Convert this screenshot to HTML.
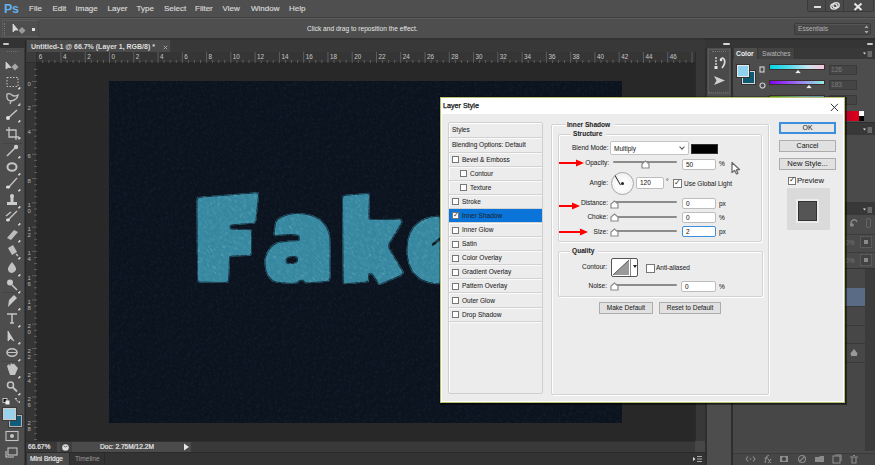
<!DOCTYPE html>
<html><head><meta charset="utf-8">
<style>
*{margin:0;padding:0;box-sizing:border-box}
html,body{width:875px;height:465px;overflow:hidden;background:#282828;font-family:"Liberation Sans",sans-serif;position:relative}
.a{position:absolute}
.mt{position:absolute;top:3px;font-size:8px;color:#dadada;line-height:11px;-webkit-text-stroke:0.15px}
.dt{position:absolute;font-size:6.5px;color:#1e1e1e;line-height:8px;white-space:nowrap;-webkit-text-stroke:0.05px}
.rl{position:absolute;font-size:6.3px;color:#c8c8c8;line-height:7px}
.ti{position:absolute;left:0;width:25px;height:17px}
</style></head><body>

<!-- menu bar -->
<div class="a" style="left:0;top:0;width:875px;height:17px;background:#4f4f4f"></div>
<div class="a" style="left:0;top:17px;width:875px;height:1px;background:#3f3f3f"></div>
<div class="a" style="left:0;top:18px;width:875px;height:1px;background:#5c5c5c"></div>
<div class="a" style="left:4px;top:1.5px;font-size:12.5px;font-weight:bold;color:#62b0ec;line-height:14px;letter-spacing:-0.3px">Ps</div>
<div class="mt" style="left:29px">File</div>
<div class="mt" style="left:52.5px">Edit</div>
<div class="mt" style="left:75.5px">Image</div>
<div class="mt" style="left:107.5px">Layer</div>
<div class="mt" style="left:136.5px">Type</div>
<div class="mt" style="left:164px">Select</div>
<div class="mt" style="left:195px">Filter</div>
<div class="mt" style="left:222.5px">View</div>
<div class="mt" style="left:251px">Window</div>
<div class="mt" style="left:289px">Help</div>
<!-- window buttons -->
<div class="a" style="left:807px;top:-2px;width:67px;height:14px;background:#4a4a4a;border:1px solid #3a3a3a;border-radius:2px"></div>
<div class="a" style="left:825px;top:0;width:1px;height:11px;background:#3a3a3a"></div>
<div class="a" style="left:843px;top:0;width:1px;height:11px;background:#3a3a3a"></div>
<div class="a" style="left:814px;top:6px;width:7px;height:2px;background:#e0e0e0"></div>
<svg class="a" style="left:829px;top:1px" width="12" height="10"><ellipse cx="5" cy="5.5" rx="3.2" ry="2.6" fill="none" stroke="#e0e0e0" stroke-width="1.4"/><ellipse cx="7" cy="4.2" rx="3.2" ry="2.6" fill="none" stroke="#e0e0e0" stroke-width="1.4"/></svg>
<svg class="a" style="left:852.5px;top:1.5px" width="11" height="10"><path d="M1.5,1.5 L8.5,8 M8.5,1.5 L1.5,8" stroke="#e8e8e8" stroke-width="1.9"/></svg>
<!-- options bar -->
<div class="a" style="left:0;top:19px;width:875px;height:19px;background:#4e4e4e"></div>
<div class="a" style="left:2px;top:20px;width:37px;height:17px;border:1px solid #5a5a5a;border-right:1px solid #444"></div>
<div class="a" style="left:4px;top:23px;width:1px;height:12px;border-left:1px dotted #777"></div>
<svg class="a" style="left:12px;top:23px" width="16" height="13"><path d="M1,1 L1,9 L3,7 L6,7 Z" fill="#d8d8d8" stroke="#d8d8d8" stroke-width="0.8"/><path d="M10,4 L13.5,7.5 L10,11 L6.5,7.5 Z" fill="#9a9a9a"/></svg>
<div class="a" style="left:32px;top:28px;width:3px;height:3px;background:#e0e0e0"></div>
<div class="a" style="left:307px;top:25px;font-size:6.6px;color:#e6e6e6;line-height:8px">Click and drag to reposition the effect.</div>
<div class="a" style="left:794px;top:23px;width:77px;height:12px;background:#474747;border:1px solid #3b3b3b;border-radius:2px;box-shadow:inset 0 1px 0 #555"></div>
<div class="a" style="left:798px;top:25px;font-size:6.6px;color:#b4b4b4;line-height:8px">Essentials</div>
<svg class="a" style="left:864px;top:25px" width="5" height="9"><path d="M2.5,0.5 L4.5,3 L0.5,3 Z M2.5,8.5 L4.5,6 L0.5,6 Z" fill="#aaa"/></svg>
<div class="a" style="left:0;top:38px;width:875px;height:2px;background:#333"></div>

<!-- tools panel -->
<div class="a" style="left:0;top:40px;width:25px;height:425px;background:#4d4d4d;border-right:1px solid #3a3a3a"></div>
<div class="a" style="left:0;top:40px;width:25px;height:8px;background:#333"></div>
<div class="a" style="left:3px;top:42.5px;width:6px;height:2.5px;background:#c8c8c8;border-radius:1px"></div>
<div class="a" style="left:7px;top:50.5px;width:11px;height:1px;border-top:1px dotted #707070"></div>
<div class="a" style="left:2px;top:143px;width:21px;height:1px;background:#444"></div>
<div class="a" style="left:2px;top:291.5px;width:21px;height:1px;background:#444"></div>
<div class="a" style="left:2px;top:361px;width:21px;height:1px;background:#444"></div>
<svg class="a" style="left:0;top:55px" width="25" height="410" fill="none" stroke="#c4c4c4" stroke-width="1.3">
<!-- move 65.5 -->
<path d="M6,7 L6,14 L8,12.5 L11,12.5 Z" fill="#d0d0d0" stroke="#d0d0d0" stroke-width="0.8"/>
<path d="M15,8.5 L18.5,12 L15,15.5 L11.5,12 Z" fill="#a8a8a8" stroke="none"/>
<!-- marquee 82 -->
<rect x="7" y="22.5" width="11" height="9" stroke-dasharray="1.5 1.5" stroke-width="1"/>
<!-- lasso 98 -->
<path d="M7,39 Q6,46 11,46 Q17,45 18,40 Q14,42 12,40 Q9,38 7,39 Z M11,46 L10,49"/>
<!-- quick select 115 -->
<path d="M7,64 L17,55" stroke-width="1.6"/><circle cx="8" cy="63" r="2" fill="#ddd" stroke="none"/>
<!-- crop 132 -->
<path d="M9,72 L9,82 L19,82 M6,75 L16,75 L16,85"/>
<!-- eyedropper 150 -->
<path d="M7,101 L15,93" stroke-width="1.6"/><circle cx="16" cy="92" r="2.2" fill="#ccc" stroke="none"/>
<!-- spot heal 167 -->
<ellipse cx="12" cy="112" rx="4.5" ry="3.8" stroke-width="2"/>
<!-- brush 183 -->
<path d="M8,133 L17,123" stroke-width="1.3"/><ellipse cx="8" cy="132" rx="2.2" ry="1.5" fill="#ddd" stroke="none"/>
<!-- clone stamp 200 -->
<rect x="7" y="147" width="10" height="3" fill="#ccc" stroke="none"/><rect x="10.5" y="141" width="3" height="6" fill="#ccc" stroke="none"/><circle cx="12" cy="141" r="2" fill="#ccc" stroke="none"/>
<!-- history brush 216.5 -->
<path d="M7,166 L17,156 M6,161 L11,157" stroke-width="1.4"/><ellipse cx="8" cy="165" rx="2" ry="1.4" fill="#ddd" stroke="none"/>
<!-- eraser 234 -->
<path d="M7,183 L14,175 L18,177 L11,185 Z" fill="#bdbdbd" stroke="none"/>
<!-- bucket 251 -->
<path d="M8,193 L13,190 L17,197 L12,200 Z" fill="#bdbdbd" stroke="none"/><path d="M16,199 L18,201" />
<!-- blur 267.5 -->
<path d="M12,207 Q17,213 16,215 Q14,218 12,218 Q9,218 8,215 Q7,213 12,207 Z" fill="#c0c0c0" stroke="none"/>
<!-- dodge 284.5 -->
<circle cx="10" cy="227.5" r="3" fill="#c8c8c8" stroke="none"/><path d="M12,230 L17,235" stroke-width="1.6"/>
<!-- pen 302 -->
<path d="M8,252 L9,245 L14,240 L17,243 L12,248 Z" fill="#c8c8c8" stroke="none"/>
<!-- type 319 -->
<path d="M7,259 L17,259 M12,259 L12,268 M10,268 L14,268" stroke-width="1.5"/>
<!-- path select 336 -->
<path d="M8,276 L8,286 L10.5,283.5 L14,286 Z" fill="#ccc" stroke="#ccc" stroke-width="0.8"/>
<!-- ellipse 352.5 -->
<ellipse cx="12" cy="297.5" rx="5" ry="3.8" stroke-width="1.6"/><path d="M8,297.5 L16,297.5" stroke-width="1"/>
<!-- hand 370 -->
<path d="M7,311 L9,309 L10,311 L11,308 L13,309.5 L14,308.5 L16,311 L18,313 L15,320 L10,320 Z" fill="#c4c4c4" stroke="none"/>
<!-- zoom 387.5 -->
<circle cx="10.5" cy="330" r="3" stroke-width="1.5"/><path d="M13,332.5 L17,336.5" stroke-width="1.8"/>
<!-- more triangles -->
<path d="M18,34 L20,34 L20,32 Z M18,50.5 L20,50.5 L20,48.5 Z M18,67 L20,67 L20,65 Z M18,84 L20,84 L20,82 Z M18,103 L20,103 L20,101 Z M18,120 L20,120 L20,118 Z M18,136 L20,136 L20,134 Z M18,153 L20,153 L20,151 Z M18,170 L20,170 L20,168 Z M18,187 L20,187 L20,185 Z M18,204 L20,204 L20,202 Z M18,221 L20,221 L20,219 Z M18,238 L20,238 L20,236 Z M18,255 L20,255 L20,253 Z M18,272 L20,272 L20,270 Z M18,289 L20,289 L20,287 Z M18,306 L20,306 L20,304 Z M18,323 L20,323 L20,321 Z M18,340 L20,340 L20,338 Z" fill="#d0d0d0" stroke="#d0d0d0" stroke-width="0.8"/>
<!-- default colors ~400 -->
<rect x="3" y="343.5" width="4" height="4" fill="#111" stroke="#ddd" stroke-width="0.8"/><rect x="5.5" y="345.5" width="4" height="4" fill="#eee" stroke="none"/><path d="M15,343.5 L19.5,348 M15,343.5 L17,343.5 M19.5,348 L19.5,346" stroke-width="1"/>
</svg>
<div class="a" style="left:9px;top:414.5px;width:12.5px;height:12.5px;background:#0f5d7c;border:1px solid #b8b0a8;box-shadow:0 0 0 1px #3a3a3a"></div>
<div class="a" style="left:3px;top:407.5px;width:12.5px;height:12px;background:#98d2ec;border:1px solid #d0ccc8;box-shadow:0 0 0 1px #3a3a3a"></div>
<svg class="a" style="left:4px;top:430px" width="17" height="30" fill="none" stroke="#c4c4c4" stroke-width="1.1">
<rect x="2" y="1.5" width="12" height="9"/><circle cx="8" cy="6" r="2" fill="#c4c4c4" stroke="none"/>
<rect x="4" y="18" width="9" height="7"/><path d="M2,21 L2,27 L10,27" />
</svg>

<!-- doc area -->
<div class="a" style="left:26px;top:40px;width:679px;height:12px;background:#383838"></div>
<div class="a" style="left:27px;top:40px;width:144px;height:12px;background:#4a4a4a;border-right:1px solid #3a3a3a"></div>
<div class="a" style="left:31px;top:42.5px;font-size:7px;font-weight:bold;color:#dedede;line-height:8px">Untitled-1 @ 66.7% (Layer 1, RGB/8) *</div>
<svg class="a" style="left:162.5px;top:44.5px" width="5" height="5"><path d="M0.8,0.8 L4.2,4.2 M4.2,0.8 L0.8,4.2" stroke="#aaa" stroke-width="0.9"/></svg>
<div class="a" style="left:26px;top:52px;width:669px;height:11px;background:#353535;border-bottom:1px solid #262626"></div>
<div class="a" style="left:26px;top:52px;width:11px;height:11px;background:#3c3c3c;border-right:1px solid #2e2e2e;border-bottom:1px solid #2e2e2e"></div>
<div class="a" style="left:26px;top:63px;width:11px;height:378px;background:#353535;border-right:1px solid #262626"></div>
<div class="a" style="left:37px;top:63px;width:658px;height:378px;background:#282828"></div>
<svg class="a" style="left:37px;top:52px" width="658" height="11"><path d="M5.76,8 L5.76,11 M11.82,8 L11.82,11 M17.89,8 L17.89,11 M23.96,0 L23.96,11 M30.03,8 L30.03,11 M36.09,8 L36.09,11 M42.16,8 L42.16,11 M48.23,0 L48.23,11 M54.30,8 L54.30,11 M60.37,8 L60.37,11 M66.43,8 L66.43,11 M72.50,0 L72.50,11 M78.57,8 L78.57,11 M84.64,8 L84.64,11 M90.70,8 L90.70,11 M96.77,0 L96.77,11 M102.84,8 L102.84,11 M108.91,8 L108.91,11 M114.97,8 L114.97,11 M121.04,0 L121.04,11 M127.11,8 L127.11,11 M133.17,8 L133.17,11 M139.24,8 L139.24,11 M145.31,0 L145.31,11 M151.38,8 L151.38,11 M157.44,8 L157.44,11 M163.51,8 L163.51,11 M169.58,0 L169.58,11 M175.65,8 L175.65,11 M181.71,8 L181.71,11 M187.78,8 L187.78,11 M193.85,0 L193.85,11 M199.92,8 L199.92,11 M205.98,8 L205.98,11 M212.05,8 L212.05,11 M218.12,0 L218.12,11 M224.19,8 L224.19,11 M230.25,8 L230.25,11 M236.32,8 L236.32,11 M242.39,0 L242.39,11 M248.46,8 L248.46,11 M254.52,8 L254.52,11 M260.59,8 L260.59,11 M266.66,0 L266.66,11 M272.73,8 L272.73,11 M278.79,8 L278.79,11 M284.86,8 L284.86,11 M290.93,0 L290.93,11 M297.00,8 L297.00,11 M303.06,8 L303.06,11 M309.13,8 L309.13,11 M315.20,0 L315.20,11 M321.27,8 L321.27,11 M327.33,8 L327.33,11 M333.40,8 L333.40,11 M339.47,0 L339.47,11 M345.54,8 L345.54,11 M351.60,8 L351.60,11 M357.67,8 L357.67,11 M363.74,0 L363.74,11 M369.81,8 L369.81,11 M375.88,8 L375.88,11 M381.94,8 L381.94,11 M388.01,0 L388.01,11 M394.08,8 L394.08,11 M400.14,8 L400.14,11 M406.21,8 L406.21,11 M412.28,0 L412.28,11 M418.35,8 L418.35,11 M424.41,8 L424.41,11 M430.48,8 L430.48,11 M436.55,0 L436.55,11 M442.62,8 L442.62,11 M448.69,8 L448.69,11 M454.75,8 L454.75,11 M460.82,0 L460.82,11 M466.89,8 L466.89,11 M472.95,8 L472.95,11 M479.02,8 L479.02,11 M485.09,0 L485.09,11 M491.16,8 L491.16,11 M497.22,8 L497.22,11 M503.29,8 L503.29,11 M509.36,0 L509.36,11 M515.43,8 L515.43,11 M521.50,8 L521.50,11 M527.56,8 L527.56,11 M533.63,0 L533.63,11 M539.70,8 L539.70,11 M545.76,8 L545.76,11 M551.83,8 L551.83,11 M557.90,0 L557.90,11 M563.97,8 L563.97,11 M570.03,8 L570.03,11 M576.10,8 L576.10,11 M582.17,0 L582.17,11 M588.24,8 L588.24,11 M594.31,8 L594.31,11 M600.37,8 L600.37,11 M606.44,0 L606.44,11 M612.51,8 L612.51,11 M618.57,8 L618.57,11 M624.64,8 L624.64,11 M630.71,0 L630.71,11 M636.78,8 L636.78,11 M642.85,8 L642.85,11 M648.91,8 L648.91,11 M654.98,0 L654.98,11" stroke="#5e5e5e" stroke-width="1"/></svg>
<div class="rl" style="left:38.7px;top:52.5px">6</div>
<div class="rl" style="left:63.0px;top:52.5px">4</div>
<div class="rl" style="left:87.2px;top:52.5px">2</div>
<div class="rl" style="left:111.5px;top:52.5px">0</div>
<div class="rl" style="left:135.8px;top:52.5px">2</div>
<div class="rl" style="left:160.0px;top:52.5px">4</div>
<div class="rl" style="left:184.3px;top:52.5px">6</div>
<div class="rl" style="left:208.6px;top:52.5px">8</div>
<div class="rl" style="left:232.8px;top:52.5px">10</div>
<div class="rl" style="left:257.1px;top:52.5px">12</div>
<div class="rl" style="left:281.4px;top:52.5px">14</div>
<div class="rl" style="left:305.7px;top:52.5px">16</div>
<div class="rl" style="left:329.9px;top:52.5px">18</div>
<div class="rl" style="left:354.2px;top:52.5px">20</div>
<div class="rl" style="left:378.5px;top:52.5px">22</div>
<div class="rl" style="left:402.7px;top:52.5px">24</div>
<div class="rl" style="left:427.0px;top:52.5px">26</div>
<div class="rl" style="left:451.3px;top:52.5px">28</div>
<div class="rl" style="left:475.6px;top:52.5px">30</div>
<div class="rl" style="left:499.8px;top:52.5px">32</div>
<div class="rl" style="left:524.1px;top:52.5px">34</div>
<div class="rl" style="left:548.4px;top:52.5px">36</div>
<div class="rl" style="left:572.6px;top:52.5px">38</div>
<div class="rl" style="left:596.9px;top:52.5px">40</div>
<div class="rl" style="left:621.2px;top:52.5px">42</div>
<div class="rl" style="left:645.4px;top:52.5px">44</div>
<div class="rl" style="left:669.7px;top:52.5px">46</div>
<svg class="a" style="left:26px;top:63px" width="11" height="378"><path d="M8,6.37 L11,6.37 M8,12.43 L11,12.43 M6,18.50 L11,18.50 M8,24.57 L11,24.57 M8,30.63 L11,30.63 M8,36.70 L11,36.70 M6,42.77 L11,42.77 M8,48.84 L11,48.84 M8,54.90 L11,54.90 M8,60.97 L11,60.97 M6,67.04 L11,67.04 M8,73.11 L11,73.11 M8,79.17 L11,79.17 M8,85.24 L11,85.24 M6,91.31 L11,91.31 M8,97.38 L11,97.38 M8,103.45 L11,103.45 M8,109.51 L11,109.51 M6,115.58 L11,115.58 M8,121.65 L11,121.65 M8,127.71 L11,127.71 M8,133.78 L11,133.78 M6,139.85 L11,139.85 M8,145.92 L11,145.92 M8,151.98 L11,151.98 M8,158.05 L11,158.05 M6,164.12 L11,164.12 M8,170.19 L11,170.19 M8,176.25 L11,176.25 M8,182.32 L11,182.32 M6,188.39 L11,188.39 M8,194.46 L11,194.46 M8,200.52 L11,200.52 M8,206.59 L11,206.59 M6,212.66 L11,212.66 M8,218.73 L11,218.73 M8,224.79 L11,224.79 M8,230.86 L11,230.86 M6,236.93 L11,236.93 M8,243.00 L11,243.00 M8,249.06 L11,249.06 M8,255.13 L11,255.13 M6,261.20 L11,261.20 M8,267.27 L11,267.27 M8,273.33 L11,273.33 M8,279.40 L11,279.40 M6,285.47 L11,285.47 M8,291.54 L11,291.54 M8,297.60 L11,297.60 M8,303.67 L11,303.67 M6,309.74 L11,309.74 M8,315.81 L11,315.81 M8,321.88 L11,321.88 M8,327.94 L11,327.94 M6,334.01 L11,334.01 M8,340.08 L11,340.08 M8,346.14 L11,346.14 M8,352.21 L11,352.21 M6,358.28 L11,358.28 M8,364.35 L11,364.35 M8,370.41 L11,370.41 M8,376.48 L11,376.48" stroke="#5e5e5e" stroke-width="1"/></svg>
<div class="rl" style="font-size:6px;color:#b8b8b8;left:27.5px;top:80.5px">0</div>
<div class="rl" style="font-size:6px;color:#b8b8b8;left:27.5px;top:104.8px">2</div>
<div class="rl" style="font-size:6px;color:#b8b8b8;left:27.5px;top:129.0px">4</div>
<div class="rl" style="font-size:6px;color:#b8b8b8;left:27.5px;top:153.3px">6</div>
<div class="rl" style="font-size:6px;color:#b8b8b8;left:27.5px;top:177.6px">8</div>
<div class="rl" style="font-size:6px;color:#b8b8b8;left:27.5px;top:201.8px">1</div>
<div class="rl" style="font-size:6px;color:#b8b8b8;left:27.5px;top:207.8px">0</div>
<div class="rl" style="font-size:6px;color:#b8b8b8;left:27.5px;top:226.1px">1</div>
<div class="rl" style="font-size:6px;color:#b8b8b8;left:27.5px;top:232.1px">2</div>
<div class="rl" style="font-size:6px;color:#b8b8b8;left:27.5px;top:250.4px">1</div>
<div class="rl" style="font-size:6px;color:#b8b8b8;left:27.5px;top:256.4px">4</div>
<div class="rl" style="font-size:6px;color:#b8b8b8;left:27.5px;top:274.7px">1</div>
<div class="rl" style="font-size:6px;color:#b8b8b8;left:27.5px;top:280.7px">6</div>
<div class="rl" style="font-size:6px;color:#b8b8b8;left:27.5px;top:298.9px">1</div>
<div class="rl" style="font-size:6px;color:#b8b8b8;left:27.5px;top:304.9px">8</div>
<div class="rl" style="font-size:6px;color:#b8b8b8;left:27.5px;top:323.2px">2</div>
<div class="rl" style="font-size:6px;color:#b8b8b8;left:27.5px;top:329.2px">0</div>
<div class="rl" style="font-size:6px;color:#b8b8b8;left:27.5px;top:347.5px">2</div>
<div class="rl" style="font-size:6px;color:#b8b8b8;left:27.5px;top:353.5px">2</div>
<div class="rl" style="font-size:6px;color:#b8b8b8;left:27.5px;top:371.7px">2</div>
<div class="rl" style="font-size:6px;color:#b8b8b8;left:27.5px;top:377.7px">4</div>
<div class="rl" style="font-size:6px;color:#b8b8b8;left:27.5px;top:396.0px">2</div>
<div class="rl" style="font-size:6px;color:#b8b8b8;left:27.5px;top:402.0px">6</div>
<div class="rl" style="font-size:6px;color:#b8b8b8;left:27.5px;top:420.3px">2</div>
<div class="rl" style="font-size:6px;color:#b8b8b8;left:27.5px;top:426.3px">8</div>
<div class="a" style="left:695px;top:52px;width:10px;height:389px;background:#383838;border-left:1px solid #2a2a2a"></div>
<div class="a" style="left:695px;top:441px;width:10px;height:11px;background:#474747"></div>
<div class="a" style="left:26px;top:441px;width:669px;height:11px;background:#393939;border-top:1px solid #303030"></div>
<div class="a" style="-webkit-text-stroke:0.2px;left:28px;top:442.5px;font-size:6.6px;color:#e6e6e6;line-height:8px">66.67%</div>
<div class="a" style="left:57px;top:442px;width:134px;height:10px;background:#4b4b4b"></div>
<div class="a" style="left:60px;top:442px;width:12px;height:10px;background:#3f3f3f"></div>
<svg class="a" style="left:61px;top:442.5px" width="9" height="9"><circle cx="4.5" cy="4.5" r="3.3" fill="#ddd"/><path d="M2.5,3 Q4.5,5 6.5,3" stroke="#555" stroke-width="0.8" fill="none"/></svg>
<div class="a" style="-webkit-text-stroke:0.2px;left:100px;top:442.5px;font-size:6.6px;color:#e8e8e8;line-height:8px">Doc: 2.75M/12.2M</div>
<svg class="a" style="left:183px;top:443px" width="7" height="8"><path d="M1,0.5 L6,4 L1,7.5 Z" fill="#e8e8e8"/></svg>
<div class="a" style="left:26px;top:452px;width:679px;height:13px;background:#333;border-top:1px solid #2a2a2a"></div>
<div class="a" style="left:27px;top:453px;width:42px;height:12px;background:#4a4a4a"></div>
<div class="a" style="-webkit-text-stroke:0.2px;left:30px;top:455px;font-size:6.6px;color:#e6e6e6;line-height:8px">Mini Bridge</div>
<div class="a" style="left:69px;top:453px;width:1px;height:12px;background:#2a2a2a"></div>
<div class="a" style="left:75px;top:455px;font-size:6.6px;color:#9a9a9a;line-height:8px">Timeline</div>
<div class="a" style="left:104px;top:453px;width:1px;height:12px;background:#2a2a2a"></div>
<svg class="a" style="left:692px;top:455px" width="11" height="8"><path d="M1,2 L3.5,4 L1,6 Z" fill="#ddd"/><path d="M5,1.5 L10,1.5 M5,4 L10,4 M5,6.5 L10,6.5" stroke="#aaa" stroke-width="1"/></svg>

<!-- canvas -->
<svg class="a" style="left:109px;top:81px" width="513" height="342" viewBox="109 81 513 342">
<defs>
<filter id="nz" x="0" y="0" width="100%" height="100%"><feTurbulence type="fractalNoise" baseFrequency="0.7 0.3" numOctaves="2" seed="11"/><feColorMatrix type="matrix" values="0 0 0 0 0.45  0 0 0 0 0.6  0 0 0 0 0.75  0 0 0 1.6 -0.7"/></filter>
<filter id="nz2" x="0" y="0" width="100%" height="100%"><feTurbulence type="fractalNoise" baseFrequency="0.6 0.22" numOctaves="2" seed="5"/><feColorMatrix type="matrix" values="0 0 0 0 0.11  0 0 0 0 0.36  0 0 0 0 0.47  0 0 0 3 -1.5"/></filter><filter id="nz3" x="0" y="0" width="100%" height="100%"><feTurbulence type="fractalNoise" baseFrequency="0.6 0.22" numOctaves="2" seed="9"/><feColorMatrix type="matrix" values="0 0 0 0 0.38  0 0 0 0 0.68  0 0 0 0 0.76  0 0 0 3 -1.6"/></filter>
<filter id="rnd" x="-5%" y="-5%" width="110%" height="110%" color-interpolation-filters="sRGB">
<feGaussianBlur in="SourceAlpha" stdDeviation="1.5"/>
<feComponentTransfer result="m"><feFuncA type="linear" slope="5" intercept="-2"/></feComponentTransfer>
<feFlood flood-color="#3587a0"/><feComposite in2="m" operator="in" result="fill"/>
<feMorphology in="m" operator="erode" radius="1" result="er"/>
<feComposite in="m" in2="er" operator="out" result="edge"/>
<feFlood flood-color="#163646"/><feComposite in2="edge" operator="in" result="ed"/>
<feMerge><feMergeNode in="fill"/><feMergeNode in="ed"/></feMerge>
</filter>
<path id="L" fill="#000" fill-rule="evenodd" d="
M196.5,197 L259.5,192 L256,223.5 L230,225.5 L230,228.8 L252,229 L252,256 L230,256.5 L229,283 L197,282.5 Z
M273,236.8 L275,222 Q278,215 294.6,213 Q318,212.5 326,225 Q330.5,232 330.5,240 L330.5,279.5 Q330,282 327,282 L304,283.5 L302,279 L298,283.5 Q285,284.5 273,282 Q264.5,276 264.3,262 Q265,248.5 276,242.3 Q288,239.8 300,240.2 L298,235.5 Q285,234 273,236.8 Z
M286,260.5 Q288,256.5 294,256.8 Q298,257.5 297.5,260.5 Q295.5,263.5 290,263.3 Q285.5,263 286,260.5 Z
M342,195 L370,192.8 L369.2,219 L401.8,218.8 L403,222.3 L388.5,246 L404,271.9 L403,275.3 L379,285.6 L369.2,271 L369,282.2 L342.8,284.5 Z
M406.5,250 Q406.5,215.5 441,215.5 L441,284.5 Q406.5,284.5 406.5,250 Z
"/>
<clipPath id="cp"><rect x="109" y="81" width="513" height="342"/></clipPath>
<clipPath id="lc"><use href="#L" clip-rule="evenodd"/></clipPath>
</defs>
<rect x="109" y="81" width="513" height="342" fill="#0b131f"/>
<g filter="url(#rnd)"><use href="#L"/></g>
<path d="M433,244.5 L441,238" stroke="#0d1824" stroke-width="2.6" stroke-linecap="round"/>
<g clip-path="url(#cp)"><g transform="rotate(-40 365 252)"><rect x="-100" y="-200" width="930" height="900" filter="url(#nz)" opacity="0.09"/></g></g>
<g clip-path="url(#lc)"><g transform="rotate(-40 320 240)"><rect x="100" y="50" width="440" height="380" filter="url(#nz2)" opacity="0.6"/><rect x="100" y="50" width="440" height="380" filter="url(#nz3)" opacity="0.25"/></g></g>
</svg>

<!-- right panels -->
<div class="a" style="left:705px;top:38px;width:170px;height:427px;background:#2e2e2e"></div>
<div class="a" style="left:705px;top:40px;width:170px;height:7.5px;background:#353535"></div>
<div class="a" style="left:723px;top:42.5px;width:7px;height:2.5px;background:#d8d8d8;border-radius:1px"></div>
<div class="a" style="left:867px;top:42.5px;width:6px;height:2.5px;background:#c8c8c8;border-radius:1px"></div>
<!-- icon column -->
<div class="a" style="left:707px;top:47.5px;width:24px;height:417.5px;background:#4d4d4d"></div>
<div class="a" style="left:708px;top:48.5px;width:22px;height:45px;border:1px solid #5a5a5a;background:#4a4a4a"></div>
<div class="a" style="left:712px;top:51px;width:14px;height:1px;border-top:1px dotted #777"></div>
<svg class="a" style="left:713px;top:56px" width="14" height="14"><path d="M2,2 L4,2 M2,5 L4,5 M2,8 L4,8" stroke="#cfcfcf" stroke-width="1.3"/><rect x="1.5" y="10" width="3" height="3" fill="#e6e6e6"/><path d="M7.5,3.5 Q10,0.5 11.5,4 Q12.5,8 9,12" stroke="#d8d8d8" stroke-width="1.8" fill="none"/><circle cx="8" cy="4" r="1.3" fill="#e8e8e8"/></svg>
<svg class="a" style="left:713px;top:75px" width="13" height="11"><path d="M1,1 L12,5.5 L1,10 L3.5,5.5 Z" fill="#d0d0d0"/></svg>
<div class="a" style="left:708px;top:92px;width:22px;height:1px;border-top:1px dotted #6a6a6a"></div>
<!-- color panel -->
<div class="a" style="left:733px;top:47.5px;width:142px;height:74px;background:#4d4d4d"></div>
<div class="a" style="left:733px;top:47.5px;width:142px;height:11px;background:#383838"></div>
<div class="a" style="left:734px;top:48px;width:23px;height:11px;background:#4d4d4d"></div>
<div class="a" style="left:736px;top:49.5px;font-size:6.8px;font-weight:bold;color:#f0f0f0;line-height:8px">Color</div>
<div class="a" style="left:757.5px;top:48px;width:37px;height:10.5px;background:#424242;border-right:1px solid #333"></div>
<div class="a" style="left:762px;top:49.5px;font-size:6.6px;color:#b8b8b8;line-height:8px">Swatches</div>
<svg class="a" style="left:862px;top:51px" width="11" height="6"><path d="M1,1.5 L4,1.5 L2.5,3.5 Z" fill="#ddd"/><path d="M5.5,1 L10,1 M5.5,3 L10,3 M5.5,5 L10,5" stroke="#9a9a9a" stroke-width="1"/></svg>
<!-- swatches -->
<div class="a" style="left:742px;top:71px;width:13px;height:13px;background:#0e5a75;border:1px solid #d8d8d8;box-shadow:0 0 0 1px #333"></div>
<div class="a" style="left:736.5px;top:65px;width:12px;height:12px;background:#8fd2f0;border:1px solid #e8e8e8;box-shadow:0 0 0 1px #333"></div>
<!-- sliders -->
<svg class="a" style="left:759px;top:66px" width="7" height="7"><rect x="1" y="1" width="4" height="5" fill="none" stroke="#ccc" stroke-width="1.2"/></svg>
<svg class="a" style="left:759px;top:82px" width="7" height="7"><circle cx="3.5" cy="3.5" r="2.5" fill="none" stroke="#ccc" stroke-width="1.2"/></svg>
<div class="a" style="left:770px;top:65px;width:54px;height:3.5px;background:linear-gradient(90deg,#00d4e6,#5fdcec 40%,#c8e4ee 70%,#f6c4dc);box-shadow:0 0 0 1px #3a2e2e"></div>
<svg class="a" style="left:794px;top:69px" width="8" height="5"><path d="M4,0.5 L7.5,4.5 L0.5,4.5 Z" fill="#eee" stroke="#333" stroke-width="0.6"/></svg>
<div class="a" style="left:770px;top:80.5px;width:54px;height:3.5px;background:linear-gradient(90deg,#8400f0,#9a70f0 50%,#8ef0dc);box-shadow:0 0 0 1px #3a2e2e"></div>
<svg class="a" style="left:805px;top:84px" width="8" height="5"><path d="M4,0.5 L7.5,4.5 L0.5,4.5 Z" fill="#eee" stroke="#333" stroke-width="0.6"/></svg>
<div class="a" style="left:770px;top:95.5px;width:54px;height:3.5px;background:linear-gradient(90deg,#6cc000,#8ad0c0 60%,#80c0f0);box-shadow:0 0 0 1px #3a2e2e"></div>
<div class="a" style="left:828.5px;top:64.5px;width:28.5px;height:10.5px;background:#454545;border:1px solid #3a3a3a"></div>
<div class="a" style="left:831px;top:66px;font-size:6.6px;color:#7c7c7c;line-height:8px">126</div>
<div class="a" style="left:828.5px;top:79.5px;width:28.5px;height:10.5px;background:#454545;border:1px solid #3a3a3a"></div>
<div class="a" style="left:831px;top:81px;font-size:6.6px;color:#7c7c7c;line-height:8px">183</div>
<div class="a" style="left:828.5px;top:94.5px;width:28.5px;height:10.5px;background:#454545;border:1px solid #3a3a3a"></div>
<div class="a" style="left:743px;top:111px;width:121px;height:9.5px;background:linear-gradient(90deg,#ff0000,#ffff00 17%,#00ff00 33%,#00ffff 50%,#0000ff 67%,#ff00ff 78%,#b00030 84%,#d00020 90%,#f00010 100%)"></div>
<div class="a" style="left:859px;top:111px;width:5px;height:5px;background:#fff"></div>
<div class="a" style="left:859px;top:116px;width:5px;height:4.5px;background:#000"></div>
<!-- adjustments -->
<div class="a" style="left:733px;top:122.5px;width:142px;height:12.5px;background:#383838"></div>
<svg class="a" style="left:862px;top:127px" width="11" height="6"><path d="M1,1.5 L4,1.5 L2.5,3.5 Z" fill="#ddd"/><path d="M5.5,1 L10,1 M5.5,3 L10,3 M5.5,5 L10,5" stroke="#9a9a9a" stroke-width="1"/></svg>
<div class="a" style="left:733px;top:135px;width:142px;height:66.5px;background:#4a4a4a"></div>
<!-- layers -->
<div class="a" style="left:733px;top:202px;width:142px;height:12.5px;background:#383838"></div>
<svg class="a" style="left:862px;top:206.5px" width="11" height="6"><path d="M1,1.5 L4,1.5 L2.5,3.5 Z" fill="#ddd"/><path d="M5.5,1 L10,1 M5.5,3 L10,3 M5.5,5 L10,5" stroke="#9a9a9a" stroke-width="1"/></svg>
<div class="a" style="left:733px;top:214.5px;width:142px;height:250.5px;background:#4a4a4a"></div>
<svg class="a" style="left:849px;top:218px" width="10" height="10"><path d="M2,8 Q1,4 4,2 Q7,1 8,4" stroke="#8a8a8a" stroke-width="1.4" fill="none"/><circle cx="3" cy="7" r="1.8" fill="#8a8a8a"/></svg>
<div class="a" style="left:866px;top:218px;width:5px;height:10px;border:1px solid #666;border-radius:2px"></div>
<div class="a" style="left:733px;top:233.5px;width:142px;height:1px;background:#3c3c3c"></div>
<div class="a" style="left:845px;top:239px;font-size:6.6px;color:#777;line-height:8px">0%</div>
<div class="a" style="left:860px;top:236px;width:12px;height:12px;background:#424242;border:1px solid #5a5a5a"></div>
<div class="a" style="left:864px;top:240px;width:4px;height:4px;background:#888"></div>
<div class="a" style="left:733px;top:251.5px;width:142px;height:1px;background:#3c3c3c"></div>
<div class="a" style="left:845px;top:256.5px;font-size:6.6px;color:#777;line-height:8px">0%</div>
<div class="a" style="left:860px;top:254px;width:12px;height:12px;background:#424242;border:1px solid #5a5a5a"></div>
<div class="a" style="left:864px;top:258px;width:4px;height:4px;background:#888"></div>
<div class="a" style="left:733px;top:268px;width:142px;height:1px;background:#333"></div>
<div class="a" style="left:733px;top:269px;width:132px;height:182px;background:#474747"></div>
<div class="a" style="left:865px;top:269px;width:10px;height:182px;background:#3b3b3b"></div>
<div class="a" style="left:733px;top:287.5px;width:132px;height:18px;background:#5a6b86"></div>
<div class="a" style="left:733px;top:305.5px;width:132px;height:1px;background:#3a3a3a"></div>
<div class="a" style="left:733px;top:324.5px;width:132px;height:1px;background:#3a3a3a"></div>
<div class="a" style="left:733px;top:343px;width:132px;height:1px;background:#3a3a3a"></div>
<div class="a" style="left:733px;top:362px;width:132px;height:1px;background:#3a3a3a"></div>
<svg class="a" style="left:849px;top:347px" width="10" height="10"><path d="M1,7 L5,2 L9,7 Z" fill="#9a9a9a"/><rect x="2" y="7" width="6" height="2" fill="#9a9a9a"/></svg>
<!-- footer -->
<div class="a" style="left:733px;top:452.5px;width:142px;height:12.5px;background:#464646;border-top:1px solid #3a3a3a"></div>
<svg class="a" style="left:744px;top:454px" width="125" height="10" fill="none" stroke="#8c8c8c" stroke-width="1.1">
<path d="M2,5 L4,2.5 M2,5 L4,7.5 M9,2.5 L11,5 L9,7.5 M5.5,5 L7.5,5"/>
<path d="M21,9 Q22,1 25,1.5 M20.5,4 L24,4 M24,5 L27,9 M27,5 L24,9"/>
<rect x="36" y="2" width="8" height="6" fill="#8c8c8c" stroke="none"/><circle cx="40" cy="5" r="2" fill="#3f3f3f" stroke="none"/>
<circle cx="58" cy="5" r="3.5"/><path d="M55.5,7.5 L60.5,2.5" />
<path d="M71,3 L75,3 L76,2 L80,2 L80,8 L71,8 Z" fill="#8c8c8c" stroke="none"/>
<rect x="89" y="2" width="7" height="7"/><path d="M91,1 L97,1 L97,7"/>
<path d="M106,3 L114,3 M108,3 L108,9 L112,9 L112,3 M109,1.5 L111,1.5"/>
</svg>

<!-- dialog -->
<div class="a" style="left:440px;top:97px;width:405px;height:306px;box-shadow:1px 1px 0 1px rgba(0,0,0,0.45),0 0 0 1px rgba(0,0,0,0.25)"></div>
<div class="a" style="left:440px;top:97px;width:405px;height:306px;background:#ececec;border:1px solid #b8c070"></div>
<div class="a" style="left:441px;top:98px;width:403px;height:304px;border:1px solid #fff;border-top:none"></div>
<div class="a" style="left:441px;top:98px;width:403px;height:16px;background:#fff"></div>
<div class="a" style="left:443px;top:101px;font-size:7.2px;color:#111;line-height:10px;-webkit-text-stroke:0.25px">Layer Style</div>
<div class="a" style="left:448px;top:122px;width:95px;height:272px;border:1px solid #cfcfcf;border-radius:2px;background:#ececec;box-shadow:inset 1px 1px 0 #fff"></div>
<div class="a" style="left:449px;top:122.0px;width:93px;height:16.0px;background:transparent;border-bottom:1px solid #d2d2d2;box-shadow:0 1px 0 #fafafa"></div>
<div class="dt" style="left:452px;top:126.0px;color:#222">Styles</div>
<div class="a" style="left:449px;top:138.0px;width:93px;height:14.5px;background:transparent;border-bottom:1px solid #d2d2d2;box-shadow:0 1px 0 #fafafa"></div>
<div class="dt" style="left:452px;top:141.2px;color:#222">Blending Options: Default</div>
<div class="a" style="left:449px;top:152.5px;width:93px;height:14.1px;background:transparent;border-bottom:1px solid #d2d2d2;box-shadow:0 1px 0 #fafafa"></div>
<div class="a" style="left:452px;top:156.1px;width:7px;height:7px;border:1px solid #777;background:#fff"></div>
<div class="dt" style="left:462px;top:155.6px;color:#222">Bevel &amp; Emboss</div>
<div class="a" style="left:449px;top:166.6px;width:93px;height:14.1px;background:transparent;border-bottom:1px solid #d2d2d2;box-shadow:0 1px 0 #fafafa"></div>
<div class="a" style="left:460px;top:170.1px;width:7px;height:7px;border:1px solid #777;background:#fff"></div>
<div class="dt" style="left:470px;top:169.6px;color:#222">Contour</div>
<div class="a" style="left:449px;top:180.7px;width:93px;height:14.1px;background:transparent;border-bottom:1px solid #d2d2d2;box-shadow:0 1px 0 #fafafa"></div>
<div class="a" style="left:460px;top:184.2px;width:7px;height:7px;border:1px solid #777;background:#fff"></div>
<div class="dt" style="left:470px;top:183.8px;color:#222">Texture</div>
<div class="a" style="left:449px;top:194.8px;width:93px;height:14.1px;background:transparent;border-bottom:1px solid #d2d2d2;box-shadow:0 1px 0 #fafafa"></div>
<div class="a" style="left:452px;top:198.4px;width:7px;height:7px;border:1px solid #777;background:#fff"></div>
<div class="dt" style="left:462px;top:197.9px;color:#222">Stroke</div>
<div class="a" style="left:449px;top:208.9px;width:93px;height:14.1px;background:#0a74d8;border-bottom:1px solid #d2d2d2;box-shadow:0 1px 0 #fafafa"></div>
<div class="a" style="left:452px;top:212.4px;width:7px;height:7px;border:1px solid #777;background:#fff"></div>
<div class="a" style="left:453px;top:211.4px;font-size:7px;color:#333;line-height:8px">&#10003;</div>
<div class="dt" style="left:462px;top:211.9px;color:#1a2430">Inner Shadow</div>
<div class="a" style="left:449px;top:223.0px;width:93px;height:14.1px;background:transparent;border-bottom:1px solid #d2d2d2;box-shadow:0 1px 0 #fafafa"></div>
<div class="a" style="left:452px;top:226.6px;width:7px;height:7px;border:1px solid #777;background:#fff"></div>
<div class="dt" style="left:462px;top:226.1px;color:#222">Inner Glow</div>
<div class="a" style="left:449px;top:237.1px;width:93px;height:14.1px;background:transparent;border-bottom:1px solid #d2d2d2;box-shadow:0 1px 0 #fafafa"></div>
<div class="a" style="left:452px;top:240.6px;width:7px;height:7px;border:1px solid #777;background:#fff"></div>
<div class="dt" style="left:462px;top:240.1px;color:#222">Satin</div>
<div class="a" style="left:449px;top:251.2px;width:93px;height:14.1px;background:transparent;border-bottom:1px solid #d2d2d2;box-shadow:0 1px 0 #fafafa"></div>
<div class="a" style="left:452px;top:254.8px;width:7px;height:7px;border:1px solid #777;background:#fff"></div>
<div class="dt" style="left:462px;top:254.2px;color:#222">Color Overlay</div>
<div class="a" style="left:449px;top:265.3px;width:93px;height:14.1px;background:transparent;border-bottom:1px solid #d2d2d2;box-shadow:0 1px 0 #fafafa"></div>
<div class="a" style="left:452px;top:268.9px;width:7px;height:7px;border:1px solid #777;background:#fff"></div>
<div class="dt" style="left:462px;top:268.4px;color:#222">Gradient Overlay</div>
<div class="a" style="left:449px;top:279.4px;width:93px;height:14.1px;background:transparent;border-bottom:1px solid #d2d2d2;box-shadow:0 1px 0 #fafafa"></div>
<div class="a" style="left:452px;top:282.9px;width:7px;height:7px;border:1px solid #777;background:#fff"></div>
<div class="dt" style="left:462px;top:282.4px;color:#222">Pattern Overlay</div>
<div class="a" style="left:449px;top:293.5px;width:93px;height:14.1px;background:transparent;border-bottom:1px solid #d2d2d2;box-shadow:0 1px 0 #fafafa"></div>
<div class="a" style="left:452px;top:297.1px;width:7px;height:7px;border:1px solid #777;background:#fff"></div>
<div class="dt" style="left:462px;top:296.6px;color:#222">Outer Glow</div>
<div class="a" style="left:449px;top:307.6px;width:93px;height:14.4px;background:transparent;border-bottom:1px solid #d2d2d2;box-shadow:0 1px 0 #fafafa"></div>
<div class="a" style="left:452px;top:311.3px;width:7px;height:7px;border:1px solid #777;background:#fff"></div>
<div class="dt" style="left:462px;top:310.8px;color:#222">Drop Shadow</div><!-- outer group Inner Shadow -->
<div class="a" style="left:551px;top:124px;width:218px;height:271px;border:1px solid #d3d3d3;border-radius:2px;box-shadow:inset 1px 1px 0 #fff,1px 1px 0 #fff"></div>
<div class="a" style="left:565px;top:120px;width:50px;height:8px;background:#ececec"></div>
<div class="dt" style="left:567px;top:120.5px;font-weight:bold;font-size:6.6px">Inner Shadow</div>
<!-- Structure group -->
<div class="a" style="left:558px;top:134px;width:204px;height:108px;border:1px solid #d3d3d3;border-radius:2px;box-shadow:inset 1px 1px 0 #fff,1px 1px 0 #fff"></div>
<div class="a" style="left:571px;top:130px;width:35px;height:8px;background:#ececec"></div>
<div class="dt" style="left:573px;top:130px;font-weight:bold;font-size:6.6px">Structure</div>
<!-- Blend mode -->
<div class="dt" style="left:572px;top:144px;width:36px;text-align:right">Blend Mode:</div>
<div class="a" style="left:610px;top:141px;width:79px;height:14px;background:#fff;border:1px solid #c4c4c4;border-radius:2px"></div>
<div class="dt" style="left:614px;top:144.5px">Multiply</div>
<div class="a" style="left:680px;top:145px;width:4px;height:4px;border-right:1px solid #555;border-bottom:1px solid #555;transform:rotate(45deg)"></div>
<div class="a" style="left:691px;top:144px;width:27px;height:10px;background:#000;border:1px solid #333"></div>
<!-- Opacity -->
<div class="dt" style="left:580px;top:159px;width:29px;text-align:right">Opacity:</div>
<div class="a" style="left:613px;top:161px;width:64px;height:2px;background:#8c8c8c;border-radius:1px"></div>
<div class="a" style="left:682px;top:159px;width:34px;height:11px;background:#fff;border:1px solid #bdbdbd;border-radius:2px"></div>
<div class="dt" style="left:686px;top:160.5px">50</div>
<div class="dt" style="left:719px;top:159.5px">%</div>
<!-- Angle -->
<div class="dt" style="left:580px;top:179px;width:28px;text-align:right">Angle:</div>
<div class="a" style="left:611px;top:172px;width:23px;height:23px;border:1px solid #a8a8a8;border-radius:50%;background:radial-gradient(circle at 50% 55%,#fbfbfb 40%,#e6e6e6 100%)"></div>
<div class="a" style="left:617px;top:174px;width:1px;height:11px;background:#333;transform-origin:50% 100%;transform:translateX(3px) rotate(-30deg)"></div>
<div class="a" style="left:621px;top:182px;width:3px;height:3px;background:#222;border-radius:50%"></div>
<div class="a" style="left:636px;top:177px;width:28px;height:12px;background:#fff;border:1px solid #bdbdbd;border-radius:2px"></div>
<div class="dt" style="left:640px;top:179px">120</div>
<div class="dt" style="left:666px;top:178px">&#176;</div>
<div class="a" style="left:673px;top:179px;width:9px;height:9px;border:1px solid #777;background:#fff"></div>
<div class="a" style="left:674px;top:178px;font-size:8px;color:#333;line-height:10px">&#10003;</div>
<div class="dt" style="left:684px;top:179.5px">Use Global Light</div>
<!-- Distance -->
<div class="dt" style="left:580px;top:199px;width:28px;text-align:right">Distance:</div>
<div class="a" style="left:613px;top:201px;width:64px;height:2px;background:#8c8c8c;border-radius:1px"></div>
<div class="a" style="left:682px;top:198px;width:34px;height:11px;background:#fff;border:1px solid #bdbdbd;border-radius:2px"></div>
<div class="dt" style="left:686px;top:199.5px">0</div>
<div class="dt" style="left:719px;top:199.5px">px</div>
<!-- Choke -->
<div class="dt" style="left:580px;top:213px;width:28px;text-align:right">Choke:</div>
<div class="a" style="left:613px;top:215.5px;width:64px;height:2px;background:#8c8c8c;border-radius:1px"></div>
<div class="a" style="left:682px;top:212px;width:34px;height:11px;background:#fff;border:1px solid #bdbdbd;border-radius:2px"></div>
<div class="dt" style="left:686px;top:213.5px">0</div>
<div class="dt" style="left:719px;top:213.5px">%</div>
<!-- Size -->
<div class="dt" style="left:580px;top:227.5px;width:28px;text-align:right">Size:</div>
<div class="a" style="left:613px;top:229.5px;width:64px;height:2px;background:#8c8c8c;border-radius:1px"></div>
<div class="a" style="left:682px;top:226px;width:34px;height:11px;background:#fff;border:1px solid #3b8fdc;border-radius:2px"></div>
<div class="dt" style="left:686px;top:227.5px">2</div>
<div class="dt" style="left:719px;top:227.5px">px</div>
<!-- Quality -->
<div class="a" style="left:558px;top:251px;width:205px;height:46px;border:1px solid #d3d3d3;border-radius:2px;box-shadow:inset 1px 1px 0 #fff,1px 1px 0 #fff"></div>
<div class="a" style="left:570px;top:247px;width:28px;height:8px;background:#ececec"></div>
<div class="dt" style="left:572px;top:246.5px;font-weight:bold;font-size:6.6px">Quality</div>
<div class="dt" style="left:575px;top:263px;width:32px;text-align:right">Contour:</div>
<div class="a" style="left:611px;top:258px;width:27px;height:19px;background:#fff;border:1px solid #555;border-radius:2px"></div>
<svg class="a" style="left:612px;top:259px" width="18" height="17"><polygon points="1,16 17,1 17,16" fill="#9a9a9a"/><line x1="1" y1="16" x2="17" y2="1" stroke="#555" stroke-width="1"/></svg>
<div class="a" style="left:630px;top:259px;width:1px;height:17px;background:#888"></div>
<div class="a" style="left:633px;top:265px;width:0;height:0;border-left:2px solid transparent;border-right:2px solid transparent;border-top:3px solid #222"></div>
<div class="a" style="left:646px;top:263.5px;width:9px;height:9px;border:1px solid #777;background:#fff"></div>
<div class="dt" style="left:656px;top:263.5px">Anti-aliased</div>
<div class="dt" style="left:580px;top:282px;width:27px;text-align:right">Noise:</div>
<div class="a" style="left:612px;top:284px;width:65px;height:2px;background:#8c8c8c;border-radius:1px"></div>
<div class="a" style="left:681px;top:281px;width:35px;height:11px;background:#fff;border:1px solid #bdbdbd;border-radius:2px"></div>
<div class="dt" style="left:685px;top:282.5px">0</div>
<div class="dt" style="left:719px;top:282.5px">%</div>
<!-- buttons -->
<div class="a" style="left:599px;top:302px;width:54px;height:12px;background:#e1e1e1;border:1px solid #adadad"></div>
<div class="dt" style="left:599px;top:304px;width:54px;text-align:center">Make Default</div>
<div class="a" style="left:659px;top:302px;width:62px;height:12px;background:#e1e1e1;border:1px solid #adadad"></div>
<div class="dt" style="left:659px;top:304px;width:62px;text-align:center">Reset to Default</div>
<div class="a" style="left:779px;top:122px;width:57px;height:12px;background:#e6e6e6;border:2px solid #3c8fdc"></div>
<div class="dt" style="left:779px;top:124px;width:57px;text-align:center;font-size:7px">OK</div>
<div class="a" style="left:779px;top:140px;width:57px;height:12px;background:#e1e1e1;border:1px solid #adadad"></div>
<div class="dt" style="left:779px;top:142px;width:57px;text-align:center;font-size:7px">Cancel</div>
<div class="a" style="left:779px;top:158px;width:57px;height:12px;background:#e1e1e1;border:1px solid #adadad"></div>
<div class="dt" style="left:779px;top:159.5px;width:57px;text-align:center;font-size:7.6px">New Style...</div>
<div class="a" style="left:788px;top:176.5px;width:8px;height:8px;border:1px solid #777;background:#fff"></div>
<div class="a" style="left:788.5px;top:175px;font-size:7.5px;color:#333;line-height:10px">&#10003;</div>
<div class="dt" style="left:797px;top:176.5px;font-size:7.6px">Preview</div>
<div class="a" style="left:787px;top:188px;width:43px;height:42px;background:#dadada"></div>
<div class="a" style="left:797.5px;top:200.5px;width:19.5px;height:20px;background:#555;border:1px solid #333;box-shadow:0 0 0 2px #ebebeb"></div>
<!-- close X -->
<svg class="a" style="left:830px;top:102.5px" width="9" height="9"><path d="M0.8,0.8 L8,8 M8,0.8 L0.8,8" stroke="#333" stroke-width="1"/></svg>
<!-- thumbs -->
<svg class="a" style="left:641px;top:159.5px" width="9" height="9"><path d="M1,8 L1,4 L4.5,1 L8,4 L8,8 Z" fill="#fff" stroke="#8a8a8a" stroke-width="1.2"/></svg>
<svg class="a" style="left:610px;top:199.5px" width="9" height="9"><path d="M1,8 L1,4 L4.5,1 L8,4 L8,8 Z" fill="#fff" stroke="#8a8a8a" stroke-width="1.2"/></svg>
<svg class="a" style="left:610px;top:213px" width="9" height="9"><path d="M1,8 L1,4 L4.5,1 L8,4 L8,8 Z" fill="#fff" stroke="#8a8a8a" stroke-width="1.2"/></svg>
<svg class="a" style="left:610px;top:227.5px" width="9" height="9"><path d="M1,8 L1,4 L4.5,1 L8,4 L8,8 Z" fill="#fff" stroke="#8a8a8a" stroke-width="1.2"/></svg>
<svg class="a" style="left:610px;top:282px" width="9" height="9"><path d="M1,8 L1,4 L4.5,1 L8,4 L8,8 Z" fill="#fff" stroke="#8a8a8a" stroke-width="1.2"/></svg>
<!-- red arrows -->
<svg class="a" style="left:558px;top:158px" width="28" height="10"><path d="M1,5 L20,5" stroke="#f00" stroke-width="2"/><path d="M18,1.5 L26,5 L18,8.5 Z" fill="#f00"/></svg>
<svg class="a" style="left:558px;top:200.5px" width="28" height="10"><path d="M1,5 L16,5" stroke="#f00" stroke-width="2"/><path d="M14,1.5 L22,5 L14,8.5 Z" fill="#f00"/></svg>
<svg class="a" style="left:558px;top:226.5px" width="32" height="10"><path d="M1,5 L24,5" stroke="#f00" stroke-width="2"/><path d="M22,1.5 L30,5 L22,8.5 Z" fill="#f00"/></svg>
<svg class="a" style="left:730px;top:160.5px" width="12" height="15"><path d="M2,1.5 L2,11.5 L4.5,9.5 L6.5,13 L8,12.2 L6.2,9 L9.5,8.5 Z" fill="#fff" stroke="#6a6a6a" stroke-width="1.3" stroke-linejoin="round"/></svg>

</body></html>
